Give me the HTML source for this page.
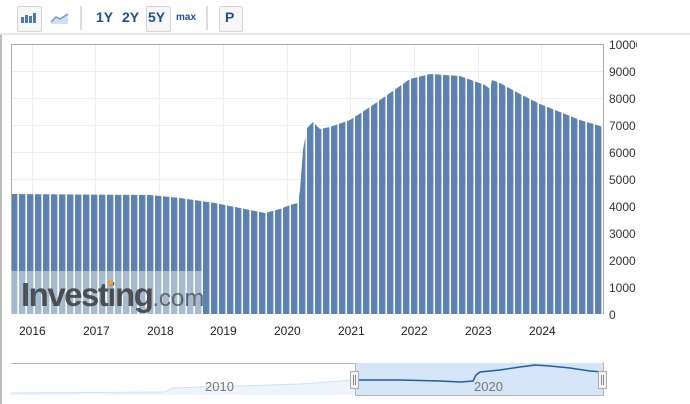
<!DOCTYPE html>
<html><head><style>
body{margin:0;width:690px;height:404px;background:#fff;font-family:"Liberation Sans",Arial,sans-serif;overflow:hidden;position:relative}
.b{position:absolute;box-sizing:border-box}
.btn{position:absolute;top:6px;height:24px;border:1px solid #d5d5d5;border-radius:2px;background:#f7f7f7}
.t{position:absolute;color:#1d4f91;font-weight:bold;font-size:14px;top:9px}
.yl{position:absolute;left:609px;font-size:12px;color:#333}
.xl{position:absolute;top:324px;font-size:12px;color:#222}
</style></head><body>
<div class="b" style="left:0;top:33px;width:690px;height:2px;background:#e6e6e6"></div>
<div class="b" style="left:0;top:35px;width:2px;height:369px;background:#bbb"></div>
<div class="btn" style="left:17px;width:23px"></div>
<svg class="b" style="left:20px;top:11px" width="18" height="14"><rect x="1" y="6" width="3" height="6" fill="#4a78b0"/><rect x="5" y="4" width="3" height="8" fill="#4a78b0"/><rect x="9" y="5" width="3" height="7" fill="#4a78b0"/><rect x="13" y="2" width="3" height="10" fill="#4a78b0"/></svg>
<svg class="b" style="left:50px;top:11px" width="20" height="14"><path d="M1 12 L6 7 L10 9 L18 4 L18 13 L1 13Z" fill="#cfe0f2"/><path d="M1 11 L6 6 L10 8 L18 3" stroke="#6c98c9" stroke-width="1.5" fill="none"/></svg>
<div class="b" style="left:80px;top:6px;width:2px;height:24px;background:#ddd"></div>
<div class="t" style="left:96px">1Y</div>
<div class="t" style="left:122px">2Y</div>
<div class="btn" style="left:146px;width:23px"></div>
<div class="t" style="left:148px">5Y</div>
<div class="t" style="left:176px;font-size:10px;top:12px">max</div>
<div class="b" style="left:206px;top:6px;width:2px;height:24px;background:#ddd"></div>
<div class="btn" style="left:219px;width:22px"></div>
<div class="t" style="left:225px">P</div>

<svg class="b" style="left:0;top:0" width="690" height="404">
<defs>
<pattern id="p" x="11" y="0" width="8" height="10" patternUnits="userSpaceOnUse"><rect x="0" y="0" width="6.4" height="10" fill="#5b82b0"/></pattern>
</defs>
<g stroke="#eee" stroke-width="1">
<line x1="11" y1="71.5" x2="603" y2="71.5"/><line x1="11" y1="98.5" x2="603" y2="98.5"/><line x1="11" y1="125.5" x2="603" y2="125.5"/><line x1="11" y1="152.5" x2="603" y2="152.5"/><line x1="11" y1="179.5" x2="603" y2="179.5"/>
<line x1="32.5" y1="44" x2="32.5" y2="314"/><line x1="95.5" y1="44" x2="95.5" y2="314"/><line x1="159.5" y1="44" x2="159.5" y2="314"/><line x1="223.5" y1="44" x2="223.5" y2="314"/><line x1="287.5" y1="44" x2="287.5" y2="314"/><line x1="350.5" y1="44" x2="350.5" y2="314"/><line x1="414.5" y1="44" x2="414.5" y2="314"/><line x1="478.5" y1="44" x2="478.5" y2="314"/><line x1="541.5" y1="44" x2="541.5" y2="314"/>
</g>
<polygon fill="url(#p)" points="11,194 150,195 180,198 215,203 245,209 265,213 280,209 290,205 298,203 300,190 303,150 307,128 313,122 320,129 330,127 350,120 370,107 390,93 410,79 430,74 460,76 485,85 490,89 492,80 500,83 520,94 540,104 560,112 580,120 600,126 603,128 603,314 11,314"/>
<path d="M11.5 314 L11.5 44.5 L603.5 44.5 L603.5 314" stroke="#aaa" fill="none"/>
<rect x="11" y="271" width="192" height="43" fill="#fff" opacity="0.45"/>
<line x1="11" y1="363.5" x2="355" y2="363.5" stroke="#b5b5b5"/>
<path d="M11 393 L165 392 L172 388 L200 387 L240 386 L300 384 L355 380 L355 395 L11 395Z" fill="#eef4fb"/>
<path d="M11 393 L165 392 L172 388 L200 387 L240 386 L300 384 L355 380" stroke="#cfe0f2" fill="none"/>
<rect x="355" y="363" width="248" height="32" fill="#d6e6f8"/>
<path d="M355 380 L400 380 L440 381 L460 382 L473 381 L476 375 L480 372 L500 370 L520 367 L535 365 L550 366 L570 368 L590 371 L603 372" stroke="#1d5ea8" stroke-width="1.5" fill="none"/>
<path d="M355.5 363 L355.5 395.5 L603.5 395.5 L603.5 362" stroke="#b5b5b5" fill="none"/>
<rect x="350.5" y="371.5" width="8" height="17" fill="#f4f4f4" stroke="#aaa"/><line x1="353.5" y1="375" x2="353.5" y2="385" stroke="#888"/><line x1="355.5" y1="375" x2="355.5" y2="385" stroke="#888"/>
<rect x="598.5" y="371.5" width="8" height="17" fill="#f4f4f4" stroke="#aaa"/><line x1="601.5" y1="375" x2="601.5" y2="385" stroke="#888"/><line x1="603.5" y1="375" x2="603.5" y2="385" stroke="#888"/>
</svg>
<div class="b" style="left:21px;top:276px;font-size:33px;font-weight:bold;color:#3a3a3a;letter-spacing:-1.5px;opacity:.85">Investing<span style="font-weight:normal;font-size:24px;letter-spacing:0;color:#555">.com</span></div>
<div class="b" style="left:108px;top:280px;width:5px;height:5px;background:#f0a030"></div>
<div class="yl" style="top:38px">10000</div><div class="yl" style="top:65px">9000</div><div class="yl" style="top:92px">8000</div><div class="yl" style="top:119px">7000</div><div class="yl" style="top:146px">6000</div><div class="yl" style="top:173px">5000</div><div class="yl" style="top:200px">4000</div><div class="yl" style="top:227px">3000</div><div class="yl" style="top:254px">2000</div><div class="yl" style="top:281px">1000</div><div class="yl" style="top:308px">0</div>
<div style="position:absolute;left:637px;top:36px;width:53px;height:18px;background:#fff"></div>
<div class="xl" style="left:19px">2016</div><div class="xl" style="left:83px">2017</div><div class="xl" style="left:147px">2018</div><div class="xl" style="left:210px">2019</div><div class="xl" style="left:274px">2020</div><div class="xl" style="left:338px">2021</div><div class="xl" style="left:401px">2022</div><div class="xl" style="left:465px">2023</div><div class="xl" style="left:529px">2024</div>
<div class="b" style="left:205px;top:379px;font-size:13px;color:#777">2010</div>
<div class="b" style="left:474px;top:379px;font-size:13px;color:#777">2020</div>
</body></html>
